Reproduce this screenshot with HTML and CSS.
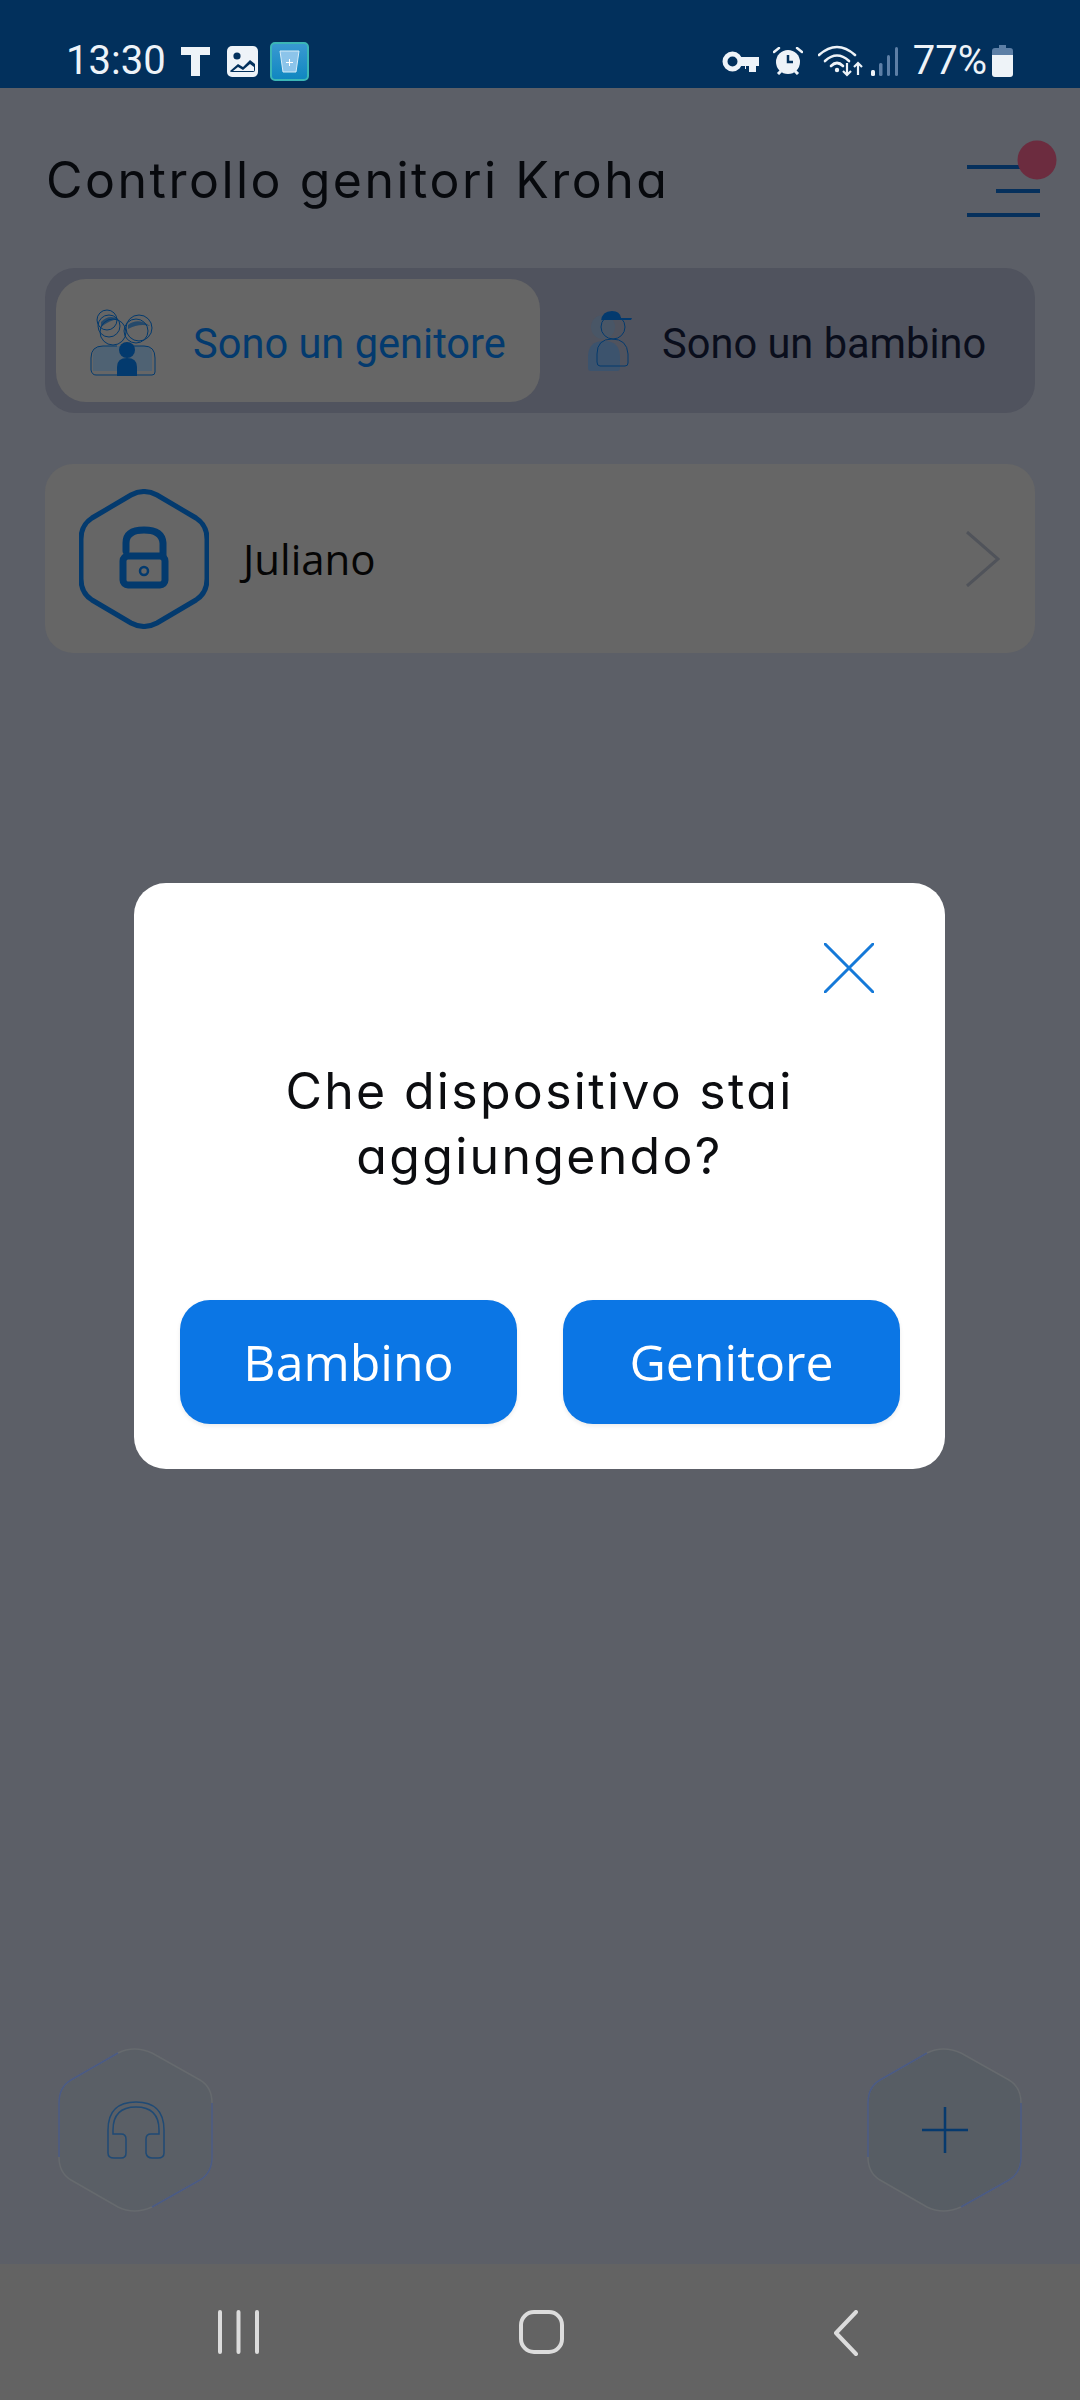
FILE: index.html
```html
<!DOCTYPE html>
<html lang="it">
<head>
<meta charset="utf-8">
<title>Controllo genitori Kroha</title>
<link rel="stylesheet" href="styles.css">
</head>
<body>
<div class="screen">
  <header class="status">
    <span class="clock">13:30</span>
    <svg class="si si-t" viewBox="0 0 31 30"><path d="M1 1h29v8h-10v21h-9V9H1z" fill="#eef3f8"/></svg>
    <svg class="si si-img" viewBox="0 0 31 31"><rect width="31" height="31" rx="5" fill="#eef3f8"/><circle cx="10" cy="10" r="3.6" fill="#02305c"/><path d="M3 25l8-7 5 3 7-7 5 4v6q0 2-2 2H5q-2 0-2-1z" fill="#02305c"/><path d="M6 25l5-4 5 3 7-6 4 3v4z" fill="#eef3f8"/></svg>
    <svg class="si si-app" viewBox="0 0 39 39"><defs><linearGradient id="wa" x1="0" y1="0" x2="0" y2="1"><stop offset="0" stop-color="#3a9ad2"/><stop offset="1" stop-color="#0f86c0"/></linearGradient></defs><rect x="1" y="1" width="37" height="37" rx="4" fill="url(#wa)" stroke="#3bb6b6" stroke-width="2"/><path d="M10 9h19l-3 21H13z" fill="#8cc4ea" stroke="#d5ecf8"/><path d="M19.500 17v7M16 20.500h7" stroke="#fff"/></svg>

    <span class="status-gap"></span>

    <svg class="si si-key" viewBox="0 0 37 21"><circle cx="10.500" cy="10.500" r="7.500" fill="none" stroke="#eef3f8" stroke-width="5"/><path d="M17 6h20v9h-3v6h-7v-3h-4v-3H17z" fill="#eef3f8"/><rect x="24" y="15" width="3" height="3" fill="#02305c"/></svg>
    <svg class="si si-alarm" viewBox="0 0 30 28"><circle cx="15" cy="15" r="12" fill="#eef3f8"/><path d="M15 8v7h5" fill="none" stroke="#02305c" stroke-width="2.500"/><path d="M1 5l5-4M29 5l-5-4" stroke="#eef3f8" stroke-width="2.500" stroke-linecap="round"/><path d="M5 27l3-3M25 27l-3-3" stroke="#eef3f8" stroke-width="3"/></svg>
    <svg class="si si-wifi" viewBox="0 0 45 32"><g fill="none" stroke="#eef3f8" stroke-width="2.600" stroke-linecap="round"><path d="M1 10Q19-6 37 10"/><path d="M7 16Q19 5 31 16"/><path d="M13 21Q19 15 25 21"/></g><circle cx="19" cy="25" r="2.200" fill="#eef3f8"/><g fill="none" stroke="#eef3f8" stroke-width="2.200"><path d="M29 18v12M25 26l4 4 4-4"/><path d="M40 30V18M36 22l4-4 4 4"/></g></svg>
    <svg class="si si-signal" viewBox="0 0 27 29"><rect x="0" y="23" width="4" height="6" rx="1.500" fill="#eef3f8"/><rect x="8" y="16" width="3.500" height="13" rx="1.500" fill="#5d7fa6"/><rect x="16" y="8" width="3" height="21" rx="1.500" fill="#5d7fa6"/><rect x="24" y="0" width="3" height="29" rx="1.500" fill="#5d7fa6"/></svg>
    <span class="battery-text">77%</span>
    <svg class="si si-batt" viewBox="0 0 21 32"><path d="M7 0h7v3h4q3 0 3 3v5H0V6q0-3 3-3h4z" fill="#5d7fa6"/><path d="M0 10h21v19q0 3-3 3H3q-3 0-3-3z" fill="#eef3f8"/></svg>
  </header>

  <main class="main">
    <div class="topbar">
      <h1 class="title">Controllo genitori Kroha</h1>
      <svg class="menu" viewBox="0 0 90 80"><g stroke="#06305c" stroke-width="4"><path d="M0 27h73M29 51h44M0 75h73"/></g><circle cx="70" cy="20" r="19.500" fill="#6c2c3f"/></svg>
    </div>

    <div class="tabs">
      <div class="tab tab-on">
        <svg class="tab-parent" viewBox="0 0 68 68">
          <path d="M3 48q0-10 10-10h42q7 0 7 10v15H3z" fill="#3f5f7c" opacity=".6"/>
          <g fill="none" stroke="#033a6e" stroke-width="1">
            <circle cx="19" cy="18" r="11"/><circle cx="23" cy="24" r="13"/><circle cx="17" cy="12" r="10"/>
            <circle cx="49" cy="20" r="13"/><circle cx="46" cy="23" r="12"/>
            <path d="M1 62V50q0-12 12-12h14M42 38h12q11 0 11 12v14q0 3-3 3H6q-4 0-5-5"/>
          </g>
          <path d="M11 14q8-8 17-3-8 1-17 8zM38 17q10-8 22 1-11-3-22 3z" fill="#033a6e" opacity=".65"/>
          <circle cx="37" cy="42" r="8" fill="#033a6e"/>
          <path d="M27 68v-9q0-9 10-9t10 9v9z" fill="#033a6e"/>
        </svg>
        <span class="tab-label tab-label-on">Sono un genitore</span>
      </div>
      <div class="tab tab-off">
        <svg class="tab-kid" viewBox="0 0 44 61">
          <circle cx="15" cy="17" r="12" fill="#44586c" opacity=".6"/>
          <path d="M0 47q0-16 16-16t16 16v11q0 3-3 3H3q-3 0-3-3z" fill="#2f5478" opacity=".6"/>
          <g fill="none" stroke="#033a6e" stroke-width="1"><circle cx="25" cy="17" r="12"/><path d="M9 52V44q0-15 15-15t16 15v9q0 3-3 3H12q-3 0-3-4z"/></g>
          <path d="M13 11Q14 1 24 1q8 0 9 7h11l-1 2H13z" fill="#033a6e"/>
        </svg>
        <span class="tab-label">Sono un bambino</span>
      </div>
    </div>

    <div class="card">
      <svg class="hex" viewBox="0 0 130 140">
        <path d="M52 6Q65-1 78 6L117 29Q128 36 128 50V90Q128 104 117 111L78 134Q65 141 52 134L13 111Q2 104 2 90V50Q2 36 13 29Z" fill="none" stroke="#033a6e" stroke-width="5"/>
        <path d="M47 62V54Q47 41 65 41T84 54V66" fill="none" stroke="#033a6e" stroke-width="7" stroke-linecap="round"/>
        <rect x="44" y="67" width="42" height="29" rx="5" fill="none" stroke="#033a6e" stroke-width="7"/>
        <circle cx="65" cy="82" r="4" fill="none" stroke="#033a6e" stroke-width="2.500"/>
      </svg>
      <span class="name">Juliano</span>
      <svg class="chev" viewBox="0 0 34 56"><path d="M1 1l31 27L1 55" fill="none" stroke="#50535a" stroke-width="3"/></svg>
    </div>

    <div class="fabs">
      <div class="fab">
        <svg class="fab-hex" viewBox="0 0 155 166"><path d="M60 6Q76-2 94 6L142 33Q154 40 154 56V110Q154 126 142 133L94 160Q76 168 60 160L13 133Q1 126 1 110V56Q1 40 13 33Z" fill="#5a5f66" stroke="#666a6e" stroke-width="1.500"/><path d="M1 110V56Q1 40 13 33L60 6M154 56V110Q154 126 142 133L94 160" fill="none" stroke="#4a5a85" stroke-width="1.500"/></svg>
        <svg class="fab-icon fab-phones" viewBox="0 0 58 58"><g fill="none" stroke="#1f4a75" stroke-width="1.500"><path d="M1 52V29Q1 1 29 1T57 29V52Q57 57 51 57H45Q40 57 39 52V38Q39 33 44 33H52V29Q52 6 29 6T6 29V33H14Q19 33 19 38V52Q19 57 14 57H7Q1 57 1 52Z"/></g></svg>
      </div>
      <div class="fab">
        <svg class="fab-hex" viewBox="0 0 155 166"><path d="M60 6Q76-2 94 6L142 33Q154 40 154 56V110Q154 126 142 133L94 160Q76 168 60 160L13 133Q1 126 1 110V56Q1 40 13 33Z" fill="#575d64" stroke="#666a6e" stroke-width="1.500"/><path d="M1 110V56Q1 40 13 33L60 6M154 56V110Q154 126 142 133L94 160" fill="none" stroke="#4a5a85" stroke-width="1.500"/></svg>
        <svg class="fab-icon fab-plus" viewBox="0 0 46 46"><path d="M23 0v46M0 23h46" stroke="#063a6e" stroke-width="2.500"/></svg>
      </div>
    </div>
  </main>

  <nav class="nav">
    <svg class="nav-recent" viewBox="0 0 41 44"><path d="M2 2v40M20.500 2v40M39 2v40" stroke="#dcdcdc" stroke-width="4" stroke-linecap="round"/></svg>
    <svg class="nav-home" viewBox="0 0 45 44"><rect x="2" y="2" width="41" height="40" rx="13" fill="none" stroke="#dcdcdc" stroke-width="4"/></svg>
    <svg class="nav-back" viewBox="0 0 25 46"><path d="M23 2L3 23l20 21" fill="none" stroke="#dcdcdc" stroke-width="4" stroke-linecap="round" stroke-linejoin="round"/></svg>
  </nav>

  <div class="overlay">
    <section class="dialog">
      <div class="dialog-top">
        <svg class="close" viewBox="0 0 50 50"><path d="M1 1l48 48M49 1L1 49" stroke="#1579d8" stroke-width="3" stroke-linecap="round"/></svg>
      </div>
      <p class="question">Che dispositivo stai<br>aggiungendo?</p>
      <div class="actions">
        <button class="btn">Bambino</button>
        <button class="btn">Genitore</button>
      </div>
    </section>
  </div>
</div>
</body>
</html>
```
FILE: styles.css
```css
* { box-sizing: border-box; }
html, body { margin: 0; padding: 0; }
body { width: 1080px; height: 2400px; overflow: hidden; background: #5c5f67; }
svg { display: block; flex: none; }

.screen { position: relative; width: 1080px; height: 2400px; display: flex; flex-direction: column; }

.status { height: 88px; flex: none; background: #02305c; display: flex; align-items: center; padding: 34px 67px 0 66px; color: #eef3f8; font-family: Roboto, sans-serif; font-size: 40px; }
.clock { width: 96px; line-height: 54px; }
.status-gap { flex: 1; }
.si-t { width: 31px; height: 30px; margin-left: 18px; }
.si-img { width: 31px; height: 31px; margin-left: 16px; }
.si-app { width: 39px; height: 39px; margin-left: 12px; }
.si-key { width: 37px; height: 21px; }
.si-alarm { width: 30px; height: 28px; margin-left: 14px; }
.si-wifi { width: 45px; height: 32px; margin-left: 15px; }
.si-signal { width: 27px; height: 29px; margin-left: 8px; }
.battery-text { margin-left: 15px; line-height: 54px; }
.si-batt { width: 21px; height: 32px; margin-left: 5px; }

.main { flex: 1; display: flex; flex-direction: column; background: #5c5f67; }
.topbar { height: 180px; flex: none; display: flex; align-items: center; justify-content: space-between; padding: 0 23px 0 46px; }
.title { margin: 3px 0 0; font-family: Inter, sans-serif; font-feature-settings: "cv11"; font-weight: 400; font-size: 50px; letter-spacing: 2.5px; color: #07090d; }
.menu { width: 90px; height: 80px; margin-top: 4px; }

.tabs { margin: 0 45px; height: 145px; flex: none; padding: 11px; border-radius: 30px; background: #50535e; display: flex; }
.tab { display: flex; align-items: center; border-radius: 30px; }
.tab-on { width: 484px; background: #666666; padding-left: 34px; }
.tab-off { flex: 1; padding-left: 48px; }
.tab-parent { width: 68px; height: 68px; margin-top: 2px; }
.tab-kid { width: 44px; height: 61px; margin-top: 0; }
.tab-label { font-family: Roboto, sans-serif; font-size: 41.6px; color: #0a0e1c; margin: 6px 0 0 30px; }
.tab-label-on { color: #033a6e; margin-left: 35px; }

.card { margin: 51px 45px 0; height: 189px; flex: none; border-radius: 28px; background: #666666; display: flex; align-items: center; padding: 0 35px 0 34px; }
.hex { width: 130px; height: 140px; }
.name { margin-left: 34px; font-family: "Open Sans", sans-serif; font-size: 42px; color: #050505; }
.chev { width: 34px; height: 56px; margin-left: auto; }

.fabs { margin-top: auto; padding: 0 58px 51px; display: flex; justify-content: space-between; }
.fab { position: relative; width: 155px; height: 166px; display: flex; align-items: center; justify-content: center; }
.fab-hex { position: absolute; inset: 0; width: 155px; height: 166px; }
.fab-icon { position: relative; }
.fab-phones { width: 58px; height: 58px; }
.fab-plus { width: 46px; height: 46px; }

.nav { height: 136px; flex: none; background: #636363; position: relative; display: flex; padding: 46px 0 0 218px; align-items: flex-start; }
.nav-recent { width: 41px; height: 44px; }
.nav-home { width: 45px; height: 44px; margin-left: 260px; }
.nav-back { width: 25px; height: 46px; margin-left: 269px; }

.overlay { position: absolute; top: 0; left: 0; width: 1080px; height: 2400px; padding: 883px 0 0 134px; }
.dialog { width: 811px; height: 586px; background: #ffffff; border-radius: 32px; display: flex; flex-direction: column; padding-top: 60px; }
.dialog-top { display: flex; justify-content: flex-end; padding-right: 71px; }
.close { width: 50px; height: 50px; }
.question { margin: 66px 0 2px; height: 130px; text-align: center; font-family: Inter, sans-serif; font-feature-settings: "cv11"; font-weight: 400; font-size: 50px; line-height: 65px; letter-spacing: 2.3px; color: #0c0d10; }
.actions { margin-top: 109px; padding: 0 46px; display: flex; gap: 46px; }
.btn { flex: none; width: 337px; height: 124px; border: 0; border-radius: 30px; background: #0b76e5; color: #ffffff; font-family: "Open Sans", sans-serif; font-size: 50px; padding: 0; box-shadow: 0 2px 4px rgba(0,0,0,.08); }
```
